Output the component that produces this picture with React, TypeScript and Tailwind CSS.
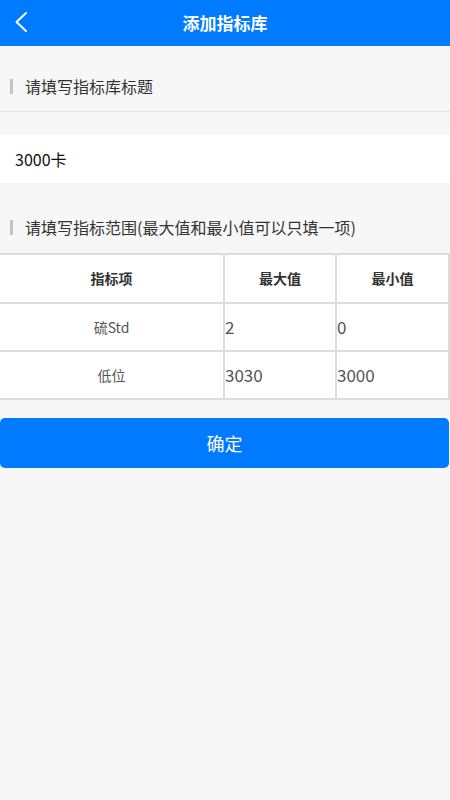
import React from "react";

const font = { fontFamily: '"Noto Sans CJK SC", "Noto Sans", sans-serif' };

function Label({ text }: { text: string }) {
  return (
    <div className="flex items-center h-[32px] pl-[10px]">
      <span className="w-[3px] h-[15px] bg-[#c4c4c4] mr-[12px]" />
      <span className="text-[16px] text-[#333] leading-none">{text}</span>
    </div>
  );
}

export default function App() {
  const rows = [
    { name: "硫Std", max: "2", min: "0" },
    { name: "低位", max: "3030", min: "3000" },
  ];
  return (
    <div style={font} className="w-[450px] h-[800px] bg-[#f7f7f7] flex flex-col">
      <div className="h-[46px] bg-[#007aff] relative flex items-center justify-center">
        <svg className="absolute left-[13px] top-[11px]" width="16" height="22" viewBox="0 0 16 22">
          <path d="M13 2 L3.5 11 L13 20" fill="none" stroke="#fff" strokeWidth="2" strokeLinecap="round" strokeLinejoin="round" />
        </svg>
        <span className="text-white text-[17px] font-bold">添加指标库</span>
      </div>

      <div className="pt-[24px] pb-[9px] border-b border-[#e3e3e3]">
        <Label text="请填写指标库标题" />
      </div>

      <div className="mt-[23px] h-[48px] bg-white flex items-center pl-[15px]">
        <span className="text-[16px] text-[#111]">3000卡</span>
      </div>

      <div className="pt-[28px] pb-[10px]">
        <Label text="请填写指标范围(最大值和最小值可以只填一项)" />
      </div>

      <table className="w-[449px] border-collapse bg-white table-fixed">
        <colgroup>
          <col className="w-[224px]" />
          <col className="w-[112px]" />
          <col className="w-[113px]" />
        </colgroup>
        <thead>
          <tr className="h-[49px]">
            <th className="border-2 border-[#dcdcdc] border-l-0 text-[14px] font-bold text-[#333]">指标项</th>
            <th className="border-2 border-[#dcdcdc] text-[14px] font-bold text-[#333]">最大值</th>
            <th className="border-2 border-[#dcdcdc] text-[14px] font-bold text-[#333]">最小值</th>
          </tr>
        </thead>
        <tbody>
          {rows.map((r) => (
            <tr key={r.name} className="h-[48px]">
              <td className="border-2 border-[#dcdcdc] border-l-0 text-center text-[14px] text-[#555]">{r.name}</td>
              <td className="border-2 border-[#dcdcdc] text-left text-[17px] text-[#555] p-0">{r.max}</td>
              <td className="border-2 border-[#dcdcdc] text-left text-[17px] text-[#555] p-0">{r.min}</td>
            </tr>
          ))}
        </tbody>
      </table>

      <button className="mt-[18px] h-[50px] w-[449px] bg-[#007aff] rounded-[5px] text-white text-[18px] flex items-center justify-center">
        确定
      </button>
    </div>
  );
}
